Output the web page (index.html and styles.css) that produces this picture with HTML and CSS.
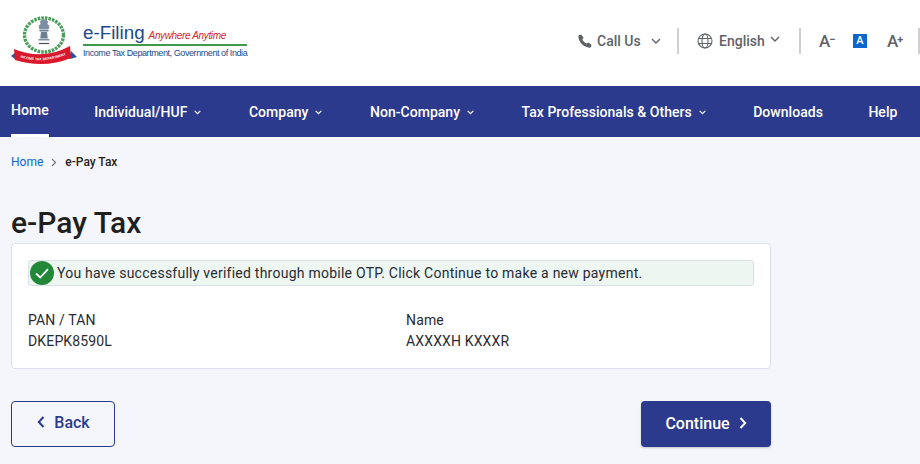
FILE: index.html
```html
<!DOCTYPE html>
<html lang="en">
<head>
<meta charset="utf-8">
<title>e-Pay Tax</title>
<link rel="stylesheet" href="styles.css">
</head>
<body>
<header class="topbar">
  <a class="logo">
    <svg class="emblem" width="66" height="52" viewBox="0 0 66 52">
      <ellipse cx="33" cy="20" rx="19.500" ry="17" fill="none" stroke="#4a9d5b" stroke-width="3.400" stroke-dasharray="2.600 1"/>
      <ellipse cx="33" cy="20" rx="15" ry="13.500" fill="#fff"/>
      <path d="M29 6.500l1.500-2h5l1.500 2-.5 2.500 2 2-1 3.500h-9l-1-3.500 2-2z" fill="#7d8fa3"/>
      <path d="M28.500 15h9v1.500h-9zM30 17h6l.8 6.500h-7.600z" fill="#6d7f92"/>
      <path d="M27.500 24h11v1.500h-11z" fill="#7d8fa3"/>
      <path d="M28 28.500h10" stroke="#4d4d4d" stroke-width="1.200"/>
      <path d="M0 41l5-4 2 8-3-1zM66 42l-6-6-2 8 3-.5z" fill="#2f4f9a"/>
      <path d="M3 34q29 12 56-3l1 12q-27 11-56 2z" fill="#d9182b"/>
      <path id="ribbon" d="M5 41q27 10 54-3" fill="none"/>
      <text class="ribbon-text"><textPath href="#ribbon" startOffset="50%" text-anchor="middle">INCOME TAX DEPARTMENT</textPath></text>
    </svg>
    <span class="logo-copy">
      <span class="logo-main"><span class="logo-name">e-Filing</span><span class="logo-tag">Anywhere Anytime</span></span>
      <span class="logo-sub">Income Tax Department, Government of India</span>
    </span>
  </a>
  <div class="tools">
    <div class="tool tool-call">
      <svg class="icon" width="16" height="16" viewBox="0 0 24 24"><path fill="#5f6368" d="M6.600 2.500l3.300 4.600-1.800 2.700c1 2.300 3.700 5 6.100 6.100l2.700-1.800 4.600 3.300v1.600c0 1.900-1.300 3.200-3 3C10.100 21.200 2.800 13.900 2 5.500 1.800 3.800 3.100 2.500 5 2.500z"/></svg>
      <span>Call Us</span>
      <svg class="chev" width="10" height="6" viewBox="0 0 10 6"><path d="M1 1l4 4 4-4" fill="none" stroke="#5f6368" stroke-width="1.400"/></svg>
    </div>
    <div class="tool tool-lang">
      <svg class="icon" width="16" height="16" viewBox="0 0 16 16" fill="none" stroke="#5f6368" stroke-width="1.100"><circle cx="8" cy="8" r="7"/><ellipse cx="8" cy="8" rx="3" ry="7"/><path d="M1.500 5.500h13M1.500 10.500h13"/></svg>
      <span>English</span>
      <svg class="chev chev-up" width="10" height="6" viewBox="0 0 10 6"><path d="M1 1l4 4 4-4" fill="none" stroke="#5f6368" stroke-width="1.400"/></svg>
    </div>
    <div class="sizes">
      <span class="size">A<sup>−</sup></span>
      <span class="size-on">A</span>
      <span class="size">A<sup>+</sup></span>
    </div>
  </div>
</header>

<nav class="nav">
  <a class="nav-item active">Home</a>
  <a class="nav-item has-menu">Individual/HUF<svg class="nav-chev" width="7" height="5" viewBox="0 0 7 5"><path d="M.7.9l2.800 2.800L6.300.9" fill="none" stroke="#fff" stroke-width="1.200"/></svg></a>
  <a class="nav-item has-menu">Company<svg class="nav-chev" width="7" height="5" viewBox="0 0 7 5"><path d="M.7.9l2.800 2.800L6.300.9" fill="none" stroke="#fff" stroke-width="1.200"/></svg></a>
  <a class="nav-item has-menu">Non-Company<svg class="nav-chev" width="7" height="5" viewBox="0 0 7 5"><path d="M.7.9l2.800 2.800L6.300.9" fill="none" stroke="#fff" stroke-width="1.200"/></svg></a>
  <a class="nav-item has-menu">Tax Professionals &amp; Others<svg class="nav-chev" width="7" height="5" viewBox="0 0 7 5"><path d="M.7.9l2.800 2.800L6.300.9" fill="none" stroke="#fff" stroke-width="1.200"/></svg></a>
  <a class="nav-item">Downloads</a>
  <a class="nav-item">Help</a>
</nav>

<main class="main">
  <div class="crumbs">
    <a class="crumb-link">Home</a>
    <svg width="6" height="9" viewBox="0 0 6 9"><path d="M1 1l3.500 3.500L1 8" fill="none" stroke="#777" stroke-width="1.200"/></svg>
    <span class="crumb-now">e-Pay Tax</span>
  </div>
  <h1 class="title">e-Pay Tax</h1>
  <section class="card">
    <div class="alert">
      <svg class="alert-icon" width="24" height="24" viewBox="0 0 24 24"><circle cx="12" cy="12" r="12" fill="#218838"/><path d="M6 12.500l4.200 4L18 8.200" fill="none" stroke="#fff" stroke-width="1.800"/></svg>
      <span>You have successfully verified through mobile OTP. Click Continue to make a new payment.</span>
    </div>
    <div class="fields">
      <div class="field"><div>PAN / TAN</div><div>DKEPK8590L</div></div>
      <div class="field"><div>Name</div><div>AXXXXH KXXXR</div></div>
    </div>
  </section>
  <div class="actions">
    <button class="btn btn-back"><svg width="8" height="12" viewBox="0 0 8 12"><path d="M6.500 1L1.800 6l4.700 5" fill="none" stroke="#2b3a8c" stroke-width="2"/></svg>Back</button>
    <button class="btn btn-next">Continue<svg width="8" height="12" viewBox="0 0 8 12"><path d="M1.500 1l4.700 5-4.700 5" fill="none" stroke="#fff" stroke-width="2"/></svg></button>
  </div>
</main>
</body>
</html>
```
FILE: styles.css
```css
* { box-sizing: border-box; }
html, body { margin: 0; }
body {
  width: 920px;
  height: 464px;
  overflow: hidden;
  background: #f5f6fb;
  font-family: Roboto, "Liberation Sans", sans-serif;
  color: #1f1f1f;
}

.topbar {
  height: 86px;
  background: #fff;
  display: flex;
  align-items: flex-start;
  justify-content: space-between;
}
.logo { display: flex; margin: 15px 0 0 11px; }
.emblem { display: block; }
.ribbon-text { font: 700 3.500px "Liberation Sans", sans-serif; fill: #fff; }
.logo-copy { display: flex; flex-direction: column; margin: 7px 0 0 6px; width: 164px; }
.logo-main { display: flex; align-items: baseline; height: 21px; }
.logo-name { font: 18.800px/21px "Liberation Sans", sans-serif; color: #1c4a8c; }
.logo-tag { font: italic 10px/21px "Liberation Sans", sans-serif; color: #d4232f; margin-left: 4px; letter-spacing: -.36px; white-space: nowrap; }
.logo-sub {
  border-top: 2px solid #3f9a4d;
  margin-top: 1px;
  padding-top: 1px;
  font: 9px/12px "Liberation Sans", sans-serif;
  letter-spacing: -.42px;
  color: #1c4a8c;
  white-space: nowrap;
}

.tools { display: flex; align-items: center; margin-top: 28px; color: #5f6368; font-size: 14px; font-weight: 500; }
.tool { display: flex; align-items: center; height: 26px; }
.tool-call { gap: 4px; width: 102px; border-right: 2px solid #cfcfcf; }
.tool-call .chev { margin-left: 6px; }
.tool-lang { gap: 6px; width: 122px; padding-left: 18px; border-right: 2px solid #cfcfcf; }
.tool-lang .chev { margin-left: -1px; }
.chev-up { position: relative; top: -2px; }
.icon { flex: none; }
.sizes { display: flex; align-items: center; width: 119px; height: 26px; padding-left: 18px; gap: 20px; border-right: 2px solid #cfcfcf; }
.size { display: block; width: 14px; font-size: 17px; line-height: 14px; color: #5f6368; white-space: nowrap; }
.size sup { font-size: 11px; line-height: 0; font-weight: 700; vertical-align: 4px; margin-left: -1px; }
.size-on { display: block; flex: none; width: 14px; height: 14px; background: #0b66d0; color: #fff; font-size: 11px; line-height: 14px; text-align: center; }

.nav {
  height: 51px;
  background: #2b3a8c;
  display: flex;
  gap: 45.500px;
  padding-left: 11px;
}
.nav-item {
  display: flex;
  align-items: center;
  height: 51px;
  color: #fff;
  font-size: 14px;
  font-weight: 500;
  letter-spacing: .03px;
  white-space: nowrap;
}
.nav-item.has-menu { padding-right: 2px; }
.nav-item.active { border-bottom: 3px solid #fff; margin-top: -1px; height: 52px; }
.nav-chev { margin-left: 7px; margin-top: 2px; }

.main { padding: 0 0 0 11px; width: 771px; }
.crumbs { display: flex; align-items: center; height: 16px; margin-top: 17px; gap: 8px; font-size: 12px; }
.crumb-link { color: #0b66d0; }
.crumb-now { color: #1f1f1f; font-weight: 500; }
.title { margin: 33px 0 0; font-size: 30px; line-height: 40px; font-weight: 500; }
.card {
  height: 126px;
  background: #fff;
  border: 1px solid #dcdfee;
  border-radius: 4px;
  padding: 16px 16px 0;
}
.alert {
  display: flex;
  align-items: center;
  gap: 3px;
  height: 26px;
  width: 726px;
  padding-left: 1px;
  background: #eef6f1;
  border: 1px solid #d9dfe6;
  border-radius: 3px;
  font-size: 14px;
  color: #2a2a33;
  letter-spacing: .245px;
}
.alert-icon { flex: none; }
.fields { display: grid; grid-template-columns: 378px 1fr; margin-top: 24px; font-size: 14px; line-height: 21px; color: #2a2a33; letter-spacing: .15px; }
.actions { display: flex; justify-content: space-between; margin-top: 32px; }
.btn {
  display: flex;
  align-items: center;
  justify-content: center;
  height: 46px;
  border-radius: 4px;
  font-family: inherit;
  font-size: 16px;
  font-weight: 500;
  padding: 0;
}
.btn-back { width: 104px; gap: 9px; background: transparent; border: 1px solid #2b3a8c; color: #2b3a8c; padding: 0 0 4px 1px; }
.btn-next { width: 130px; gap: 9px; background: #2b3a8c; border: 0; color: #fff; padding: 0 0 2px; box-shadow: 0 1px 2px rgba(0,0,0,.2); }
```
